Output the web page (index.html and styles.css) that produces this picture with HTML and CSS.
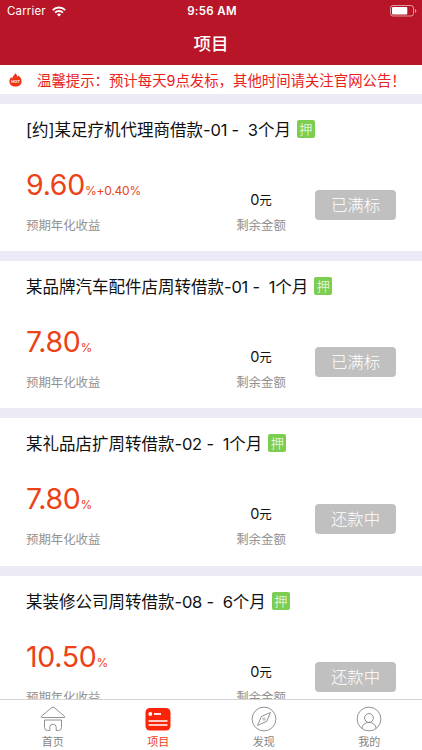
FILE: index.html
```html
<!DOCTYPE html>
<html lang="zh-CN">
<head>
    <meta charset="UTF-8">
    <meta name="viewport" content="width=device-width, initial-scale=1.0">
    <title>项目</title>
    <link rel="stylesheet" href="styles.css">
</head>
<body>
    <header class="header">
        <div class="status-bar">
            <div class="carrier">
                <span>Carrier</span>
                <svg class="wifi" viewBox="0 0 14 11" fill="none" stroke="#fff" stroke-width="1.9">
                    <path d="M.8 4.1a8.8 8.8 0 0 1 12.4 0M3.1 6.6a5.5 5.5 0 0 1 7.8 0"/>
                    <path d="M7 10.6 4.9 8.5a3 3 0 0 1 4.2 0z" fill="#fff" stroke="none"/>
                </svg>
            </div>
            <div class="clock">9:56 AM</div>
            <svg class="battery" viewBox="0 0 27 12">
                <rect x=".5" y=".5" width="23" height="10.5" rx="2.5" fill="none" stroke="#fff" stroke-opacity=".55"/>
                <rect x="2" y="2" width="15.3" height="7.5" rx="1" fill="#fff"/>
                <path d="M25 4v3.8q1.3-.6 1.3-1.9T25 4z" fill="#fff" fill-opacity=".6"/>
            </svg>
        </div>
        <h1 class="page-title">项目</h1>
    </header>

    <div class="notice">
        <svg class="hot" viewBox="0 0 13 14">
            <path d="M6 .2c1.700 1 2.300 2.300 2.400 3.800.5-.3.8-.8.9-1.400 2 1.400 3.300 3.500 3.300 5.800 0 3.100-2.600 5.200-6.100 5.200S.4 11.600.4 8.500c0-1.900.8-3.400 1.900-4.500.1.700.4 1.100.9 1.400C3.500 3.200 5.700 2.400 6 .2z" fill="#f03416"/>
            <text x="6.500" y="10" class="hot-text">HOT</text>
        </svg>
        <span class="notice-text">温馨提示：预计每天9点发标，其他时间请关注官网公告！</span>
    </div>

    <main class="list">
        <section class="card">
            <h2 class="card-title"><span>[约]某足疗机代理商借款<b>-01 -&nbsp; 3</b>个月</span><i class="tag">押</i></h2>
            <div class="card-body">
                <div class="rate">
                    <p class="rate-value">9.60<small>%+0.40%</small></p>
                    <p class="label">预期年化收益</p>
                </div>
                <div class="amount">
                    <p class="amount-value">0<small>元</small></p>
                    <p class="label">剩余金额</p>
                </div>
                <button class="btn">已满标</button>
            </div>
        </section>

        <section class="card">
            <h2 class="card-title"><span>某品牌汽车配件店周转借款<b>-01 -&nbsp; 1</b>个月</span><i class="tag">押</i></h2>
            <div class="card-body">
                <div class="rate">
                    <p class="rate-value">7.80<small>%</small></p>
                    <p class="label">预期年化收益</p>
                </div>
                <div class="amount">
                    <p class="amount-value">0<small>元</small></p>
                    <p class="label">剩余金额</p>
                </div>
                <button class="btn">已满标</button>
            </div>
        </section>

        <section class="card">
            <h2 class="card-title"><span>某礼品店扩周转借款<b>-02 -&nbsp; 1</b>个月</span><i class="tag">押</i></h2>
            <div class="card-body">
                <div class="rate">
                    <p class="rate-value">7.80<small>%</small></p>
                    <p class="label">预期年化收益</p>
                </div>
                <div class="amount">
                    <p class="amount-value">0<small>元</small></p>
                    <p class="label">剩余金额</p>
                </div>
                <button class="btn">还款中</button>
            </div>
        </section>

        <section class="card">
            <h2 class="card-title"><span>某装修公司周转借款<b>-08 -&nbsp; 6</b>个月</span><i class="tag">押</i></h2>
            <div class="card-body">
                <div class="rate">
                    <p class="rate-value">10.50<small>%</small></p>
                    <p class="label">预期年化收益</p>
                </div>
                <div class="amount">
                    <p class="amount-value">0<small>元</small></p>
                    <p class="label">剩余金额</p>
                </div>
                <button class="btn">还款中</button>
            </div>
        </section>
    </main>

    <nav class="tabs">
        <a class="tab">
            <svg viewBox="0 0 26 26" fill="none" stroke="#929292" stroke-linejoin="round">
                <path d="M11.500 1.800Q13 .600 14.500 1.800L24.600 10.300Q25.300 11.500 24 11.500H2Q.7 11.500 1.400 10.300z"/>
                <path d="M4.500 14v7.500q0 3 3 3h2.300v-3.300q0-3 3.200-3t3.200 3v3.300h2.300q3 0 3-3V14z"/>
            </svg>
            <span>首页</span>
        </a>
        <a class="tab active">
            <svg viewBox="0 0 26 26">
                <rect x=".5" y="2" width="25" height="22.500" rx="4.500" fill="#fb2408"/>
                <circle cx="5.300" cy="8" r="1.900" fill="#fff"/>
                <path d="M9 8h7" stroke="#fff" stroke-width="1.800"/>
                <path d="M3.500 15h19M3.500 19h19" stroke="#fff" stroke-width="1.500"/>
            </svg>
            <span>项目</span>
        </a>
        <a class="tab">
            <svg viewBox="0 0 26 26" fill="none" stroke="#929292" stroke-linejoin="round">
                <circle cx="13" cy="13" r="11.900"/>
                <path d="M19.500 6.500 15.700 15.300 6.500 19.500 10.300 10.500z"/>
                <circle cx="13" cy="13" r="1.200" stroke-width=".7"/>
            </svg>
            <span>发现</span>
        </a>
        <a class="tab">
            <svg viewBox="0 0 26 26" fill="none" stroke="#929292">
                <circle cx="13" cy="13" r="11.900"/>
                <circle cx="13" cy="12" r="4.400"/>
                <path d="M5.800 22.300c.5-3.600 3.300-5.900 7.200-5.900s6.700 2.300 7.200 5.900"/>
            </svg>
            <span>我的</span>
        </a>
    </nav>
</body>
</html>
```

FILE: styles.css
```css
* {
    box-sizing: border-box;
}
body {
    margin: 0;
    height: 750px;
    display: flex;
    flex-direction: column;
    overflow: hidden;
    font-family: Inter, "Noto Sans CJK SC", sans-serif;
    background: #ebeaf5;
    color: #111;
}
h1, h2, p {
    margin: 0;
    font-weight: 400;
}
.header {
    height: 65px;
    background: #b81628;
    color: #fff;
}
.status-bar {
    height: 22px;
    padding: 0 5px 0 7px;
    display: grid;
    grid-template-columns: 1fr auto 1fr;
    align-items: center;
    font-size: 11.5px;
}
.carrier {
    display: flex;
    align-items: center;
    gap: 6px;
    letter-spacing: 0.15px;
}
.wifi {
    width: 14px;
    height: 11px;
}
.clock {
    font-weight: 600;
    letter-spacing: 0.3px;
}
.battery {
    width: 27px;
    height: 12px;
    justify-self: end;
}
.page-title {
    line-height: 43px;
    text-align: center;
    font-size: 17.5px;
    font-weight: 500;
}
.notice {
    height: 29px;
    padding-left: 9px;
    display: flex;
    align-items: center;
    gap: 15px;
    background: #fff;
    color: #e8231c;
    font-size: 14.4px;
    white-space: nowrap;
}
.hot {
    width: 13px;
    height: 14px;
    flex: none;
}
.hot-text {
    font-size: 4px;
    font-weight: 700;
    fill: #fff;
    text-anchor: middle;
}
.list {
    flex: 1;
    min-height: 0;
    padding-top: 10px;
    overflow: hidden;
}
.card {
    height: 147.2px;
    margin-bottom: 10px;
    padding: 15px 26px 0;
    background: #fff;
}
.card-title {
    height: 20px;
    display: flex;
    align-items: center;
    gap: 6px;
    font-size: 16.5px;
    white-space: nowrap;
}
.card-title b {
    font-weight: 400;
    letter-spacing: -0.2px;
}
.tag {
    width: 18px;
    height: 18px;
    border-radius: 2px;
    background: #7bce50;
    color: #fff;
    font-size: 13px;
    font-style: normal;
    font-weight: 300;
    line-height: 18px;
    text-align: center;
}
.card-body {
    height: 112px;
    display: grid;
    grid-template-columns: 194px 82px 81px;
    column-gap: 6.5px;
}
.rate {
    padding-top: 28px;
}
.rate-value {
    height: 36px;
    font-size: 28.5px;
    line-height: 36px;
    letter-spacing: -0.3px;
    color: #eb4216;
}
.rate-value small {
    font-size: 12px;
    letter-spacing: -0.2px;
}
.label {
    margin-top: 14px;
    font-size: 12.4px;
    line-height: 18px;
    color: #929292;
}
.amount {
    padding: 51px 13px 0 0;
    text-align: center;
}
.amount-value {
    height: 20px;
    font-size: 14.5px;
    line-height: 20px;
}
.amount-value small {
    font-size: 12.5px;
}
.amount .label {
    margin-top: 7px;
}
.btn {
    width: 81px;
    height: 30px;
    margin-top: 51px;
    padding: 0;
    border: none;
    border-radius: 4px;
    background: #c0c0c0;
    color: #fff;
    font-family: inherit;
    font-size: 16.4px;
    font-weight: 300;
    line-height: 30px;
}
.tabs {
    height: 51px;
    padding-top: 6px;
    display: flex;
    border-top: 1px solid #d4d4d4;
    background: #fff;
}
.tab {
    flex: 1;
    display: flex;
    flex-direction: column;
    align-items: center;
    color: #858585;
    font-size: 11px;
    line-height: 16px;
}
.tab svg {
    width: 26px;
    height: 26px;
    margin-bottom: 2px;
}
.tab.active {
    color: #eb4216;
}
```
